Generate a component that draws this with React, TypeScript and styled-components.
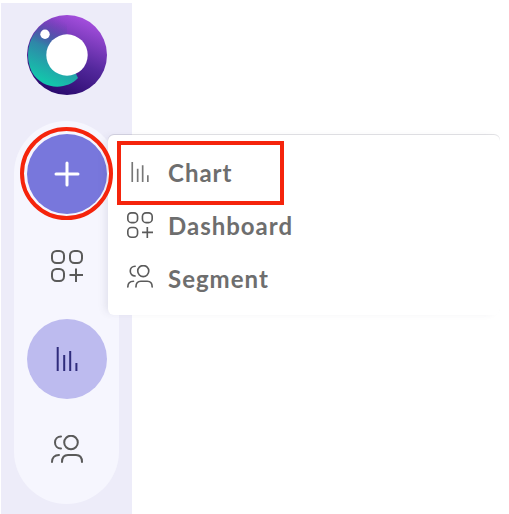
import React from "react";
import styled, { createGlobalStyle } from "styled-components";

const GlobalStyle = createGlobalStyle`
  html, body {
    margin: 0;
    height: 100%;
    background: #fff;
    font-family: "Lato", "Open Sans", sans-serif;
  }
  #root {
    height: 100%;
  }
`;

const Page = styled.div`
  position: relative;
  width: 509px;
  height: 514px;
  overflow: hidden;
  padding: 3px 0 0 1px;
  box-sizing: border-box;
`;

const Sidebar = styled.aside`
  width: 131px;
  height: 511px;
  box-sizing: border-box;
  background: #edecf9;
  display: flex;
  flex-direction: column;
  align-items: flex-start;
  padding: 12px 0 0 13px;
  gap: 26px;
`;

const Logo = styled.svg`
  width: 80px;
  height: 80px;
  margin-left: 13px;
  display: block;
  flex: none;
`;

const Pill = styled.nav`
  width: 105px;
  height: 383px;
  box-sizing: border-box;
  border-radius: 53px;
  background: #f6f6fe;
  padding: 13px 0;
  display: flex;
  flex-direction: column;
  align-items: center;
  justify-content: space-between;
`;

const RoundButton = styled.button<{ $bg?: string }>`
  width: 80px;
  height: 80px;
  border: 0;
  padding: 0;
  border-radius: 50%;
  background: ${(p) => p.$bg || "transparent"};
  display: flex;
  align-items: center;
  justify-content: center;
`;

const Menu = styled.div`
  position: absolute;
  left: 108px;
  top: 135px;
  width: 392px;
  height: 180px;
  box-sizing: border-box;
  background: #fff;
  border-radius: 6px;
  box-shadow: 0 -1px 0 rgba(40, 40, 60, 0.13), -5px 0 8px -3px rgba(60, 60, 90, 0.12);
  padding: 19px 0 0 19px;
  display: flex;
  flex-direction: column;
  gap: 17px;
`;

const MenuItem = styled.div`
  display: flex;
  align-items: center;
  gap: 15px;
  height: 36px;
  font-size: 24px;
  font-weight: 700;
  letter-spacing: 1px;
  color: #6e6e6e;
`;

const IconBox = styled.span`
  width: 26px;
  display: flex;
  justify-content: center;
`;

const RedRing = styled.div`
  position: absolute;
  left: 20px;
  top: 127px;
  width: 93px;
  height: 93px;
  box-sizing: border-box;
  border: 4px solid #f5240c;
  border-radius: 50%;
`;

const RedBox = styled.div`
  position: absolute;
  left: 117px;
  top: 141px;
  width: 167px;
  height: 64px;
  box-sizing: border-box;
  border: 4px solid #f5240c;
`;

const BarsIcon = ({ size, color }: { size: number; color: string }) => (
  <svg width={size} height={size} viewBox="0 0 24 24" fill="none" stroke={color} strokeWidth="2">
    <path d="M2.700 0v24M9.200 8v16M15.200 4v20M21.400 16v8" />
  </svg>
);

const GridIcon = ({ size }: { size: number }) => (
  <svg width={size} height={size} viewBox="0 0 32 32" fill="none" stroke="#5a5a5a" strokeWidth="2">
    <rect x="1" y="1" width="12" height="12" rx="4.500" />
    <rect x="19" y="1" width="12" height="12" rx="4.500" />
    <rect x="1" y="19" width="12" height="12" rx="4.500" />
    <path d="M18.500 25h13.500M25 18.500v13.500" />
  </svg>
);

const PeopleIcon = ({ size }: { size: number }) => (
  <svg width={size} height={size} viewBox="0 0 32 32" fill="none" stroke="#5a5a5a" strokeWidth="2" strokeLinecap="round">
    <circle cx="20" cy="7.500" r="6.800" />
    <path d="M10 1.500C6.500 1.500 4 4 4 7.500S6.500 13.500 10 13.500" />
    <path d="M11 27C11 22 13.500 20 17 20H25C28.500 20 31 22 31 27" />
    <path d="M1 27C1 23 3.500 20 8 20" />
  </svg>
);

export default function App() {
  return (
    <Page>
      <GlobalStyle />
      <Sidebar>
        <Logo viewBox="0 0 80 80">
          <defs>
            <linearGradient id="base" x1="0.8" y1="0.05" x2="0.4" y2="1">
              <stop offset="0" stopColor="#a850e0" />
              <stop offset="0.55" stopColor="#53289c" />
              <stop offset="1" stopColor="#2a0a6e" />
            </linearGradient>
            <linearGradient id="teal" gradientUnits="userSpaceOnUse" x1="10" y1="62" x2="36" y2="6">
              <stop offset="0" stopColor="#14c4ab" />
              <stop offset="0.5" stopColor="#2f86a8" />
              <stop offset="1" stopColor="#5a3fa8" stopOpacity="0" />
            </linearGradient>
          </defs>
          <circle cx="40" cy="40" r="40" fill="url(#base)" />
          <path d="M51 63C40 75 16 76 4.700 56.700A40 40 0 0 1 40 0L40 40Z" fill="url(#teal)" />
          <circle cx="40" cy="40" r="20.700" fill="#fff" />
          <circle cx="18" cy="19.300" r="4.700" fill="#fff" />
        </Logo>
        <Pill>
          <RoundButton $bg="#7877dc">
            <svg width="26" height="26" viewBox="0 0 26 26" stroke="#fff" strokeWidth="3" strokeLinecap="round">
              <path d="M13 2v22M2 13h22" />
            </svg>
          </RoundButton>
          <RoundButton>
            <GridIcon size={32} />
          </RoundButton>
          <RoundButton $bg="#bdbbef">
            <BarsIcon size={24} color="#2f2c7c" />
          </RoundButton>
          <RoundButton>
            <PeopleIcon size={32} />
          </RoundButton>
        </Pill>
      </Sidebar>
      <Menu>
        <MenuItem>
          <IconBox>
            <BarsIcon size={20} color="#777" />
          </IconBox>
          Chart
        </MenuItem>
        <MenuItem>
          <IconBox>
            <GridIcon size={26} />
          </IconBox>
          Dashboard
        </MenuItem>
        <MenuItem>
          <IconBox>
            <PeopleIcon size={26} />
          </IconBox>
          Segment
        </MenuItem>
      </Menu>
      <RedRing />
      <RedBox />
    </Page>
  );
}
